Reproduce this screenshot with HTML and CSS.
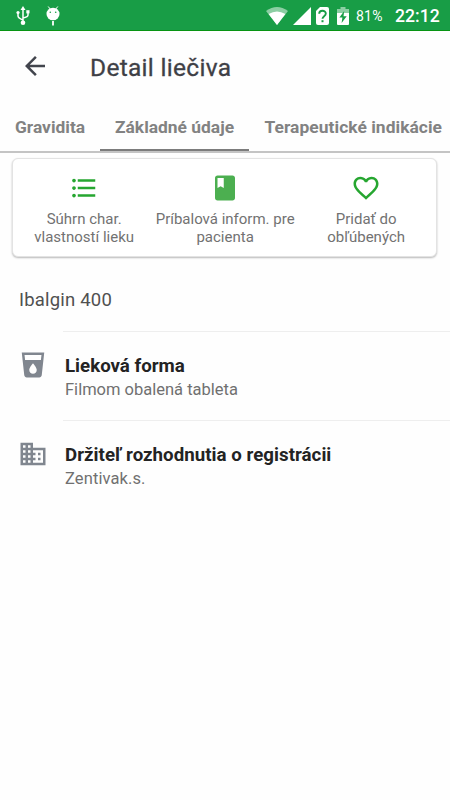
FILE: index.html
```html
<!DOCTYPE html>
<html lang="sk">
<head>
<meta charset="utf-8">
<title>Detail liečiva</title>
<link rel="stylesheet" href="styles.css">
</head>
<body>
<header class="status">
  <svg class="usb" width="14" height="20" viewBox="0 0 14 20"><path d="M7 2v14M2 7v3q0 2 5 4M12 6v3q0 2-5 3" fill="none" stroke="#fff" stroke-width="1.5"/><path d="M7 0l2.500 4h-5z"/><circle cx="2" cy="6.500" r="1.600"/><path d="M10.300 4.200h3.200v3.200h-3.200z"/><circle cx="7" cy="16.700" r="2.300"/></svg>
  <svg class="droid" width="14" height="20" viewBox="0 0 14 20"><path d="M2.200.5l2 2.500M11.800.5l-2 2.500" stroke="#fff"/><ellipse cx="7" cy="8" rx="6.500" ry="6.300"/><path d="M6.100 15h1.800v4.500H6.100z"/><circle class="hole" cx="4.300" cy="6.300" r=".8"/><circle class="hole" cx="9.700" cy="6.300" r=".8"/></svg>
  <span class="grow"></span>
  <svg class="wifi" width="22" height="18" viewBox="0 0 22 18"><path opacity=".5" d="M0 4Q11-4 22 4L11 18z"/><path d="M2.600 7Q11 2 19.400 7L11 18z"/></svg>
  <svg class="signal" width="18" height="18" viewBox="0 0 18 18"><path d="M18 0v18H0z"/></svg>
  <svg class="sim" width="13" height="18" viewBox="0 0 13 18"><path d="M4 0h7q2 0 2 2v14q0 2-2 2H2q-2 0-2-2V4z"/><path d="M3.200 6.800C3.200 2.600 9.800 2.800 9.800 6.500c0 2.700-3.300 2.700-3.300 5.300" fill="none" stroke="#189d46" stroke-width="1.900"/><path class="hole" d="M5.500 13.200h2v2h-2z"/></svg>
  <svg class="battery" width="12" height="18" viewBox="0 0 12 18"><path opacity=".5" d="M3.500 0h5v2H12v4H0V2h3.500z"/><path d="M0 6h12v11q0 1-1 1H1q-1 0-1-1z"/><path class="hole" d="M7.200 4L2.400 10.600h3L4.600 16 9.700 9.200H6.500z"/></svg>
  <span class="percent">81%</span>
  <span class="clock">22:12</span>
</header>
<div class="bar">
  <svg width="30" height="30" viewBox="0 0 24 24"><path d="M20 11H7.830l5.590-5.590L12 4l-8 8 8 8 1.410-1.410L7.830 13H20v-2z"/></svg>
  <h1>Detail liečiva</h1>
</div>
<nav class="tabs">
  <a class="tab t1">Gravidita</a>
  <a class="tab t2 active">Základné údaje</a>
  <a class="tab t3">Terapeutické indikácie</a>
</nav>
<section class="card">
  <div class="action">
    <svg width="30" height="30" viewBox="0 0 24 24"><path d="M4 10.500c-.83 0-1.500.67-1.500 1.500s.67 1.500 1.500 1.500 1.500-.67 1.500-1.500-.67-1.500-1.500-1.500zm0-6c-.83 0-1.500.67-1.500 1.500S3.170 7.500 4 7.500 5.500 6.830 5.500 6 4.830 4.500 4 4.500zm0 12c-.83 0-1.500.68-1.500 1.500s.68 1.500 1.500 1.500 1.500-.68 1.500-1.500-.67-1.500-1.500-1.500zM7 19h14v-2H7v2zm0-6h14v-2H7v2zm0-8v2h14V5H7z"/></svg>
    <p>Súhrn char.<br>vlastností lieku</p>
  </div>
  <div class="action">
    <svg width="30" height="30" viewBox="0 0 24 24"><path d="M18 2H6c-1.100 0-2 .9-2 2v16c0 1.100.9 2 2 2h12c1.100 0 2-.9 2-2V4c0-1.100-.9-2-2-2zM6 4h5v8l-2.500-1.500L6 12V4z" class="book"/></svg>
    <p>Príbalová inform. pre<br>pacienta</p>
  </div>
  <div class="action">
    <svg width="30" height="30" viewBox="0 0 24 24"><path d="M16.500 3c-1.740 0-3.410.81-4.500 2.090C10.910 3.810 9.240 3 7.500 3 4.420 3 2 5.420 2 8.500c0 3.780 3.400 6.860 8.550 11.540L12 21.350l1.450-1.320C18.600 15.360 22 12.280 22 8.500 22 5.420 19.580 3 16.500 3zm-4.400 15.550l-.1.100-.1-.1C7.140 14.240 4 11.390 4 8.500 4 6.500 5.500 5 7.500 5c1.540 0 3.040.99 3.570 2.360h1.870C13.460 5.990 14.960 5 16.500 5c2 0 3.500 1.500 3.500 3.500 0 2.890-3.140 5.740-7.900 10.050z"/></svg>
    <p>Pridať do<br>obľúbených</p>
  </div>
</section>
<h2>Ibalgin 400</h2>
<section class="row">
  <svg width="30" height="30" viewBox="0 0 24 24"><path d="M3 2l2.010 18.230C5.130 21.230 5.970 22 7 22h10c1.030 0 1.870-.77 1.990-1.770L21 2H3zm9 17c-1.660 0-3-1.340-3-3 0-2 3-5.400 3-5.400s3 3.400 3 5.400c0 1.660-1.340 3-3 3zm6.330-11H5.670l-.44-4h13.540l-.44 4z"/></svg>
  <div class="body"><h3>Lieková forma</h3><p>Filmom obalená tableta</p></div>
</section>
<section class="row">
  <svg width="30" height="30" viewBox="0 0 24 24"><path d="M12 7V3H2v18h20V7H12zM6 19H4v-2h2v2zm0-4H4v-2h2v2zm0-4H4V9h2v2zm0-4H4V5h2v2zm4 12H8v-2h2v2zm0-4H8v-2h2v2zm0-4H8V9h2v2zm0-4H8V5h2v2zm10 12h-8v-2h2v-2h-2v-2h2v-2h-2V9h8v10zm-2-8h-2v2h2v-2zm0 4h-2v2h2v-2z"/></svg>
  <div class="body"><h3 class="wide">Držiteľ rozhodnutia o registrácii</h3><p class="wide">Zentivak.s.</p></div>
</section>
</body>
</html>
```
FILE: styles.css
```css
* { box-sizing: border-box; margin: 0; padding: 0; }
body { width: 450px; height: 800px; overflow: hidden; background: #fefefe; font-family: Roboto, "Liberation Sans", sans-serif; }
svg { display: block; flex: none; }
.status { display: flex; align-items: center; height: 31px; padding: 1px 11px 0 16px; background: #189d46; border-bottom: 1px solid #079413; color: #fff; fill: #fff; }
.hole { fill: #189d46; }
.droid { margin-left: 16px; }
.grow { flex: 1; }
.signal { margin-left: 5px; }
.sim { margin-left: 5px; }
.battery { margin-left: 8px; }
.percent { width: 27px; margin-left: 7px; font-size: 14px; letter-spacing: .2px; white-space: nowrap; }
.clock { width: 44px; margin-left: 12px; font-size: 17.6px; font-weight: 500; white-space: nowrap; }
.bar { display: flex; align-items: center; height: 73px; padding-left: 20px; fill: #42454d; }
.bar svg { margin-top: -3px; }
h1 { margin-left: 40px; margin-top: -1px; font-size: 24.5px; letter-spacing: .3px; font-weight: 400; color: #3e4046; -webkit-text-stroke: .3px; white-space: nowrap; }
.tabs { display: flex; height: 49px; border-bottom: 2px solid #c4c4c4; color: #828282; font-size: 17.4px; font-weight: 700; white-space: nowrap; }
.tab { display: flex; align-items: center; padding: 0 0 1px 15px; height: 47px; }
.t1 { width: 100px; }
.t2 { width: 149px; }
.t3 { padding-left: 15.5px; letter-spacing: .05px; }
.active { border-bottom: 2px solid #7c7c7c; padding: 1px 0 0 15px; }
.card { display: grid; grid-template-columns: repeat(3, 1fr); width: 425px; height: 98.5px; margin: 5px 0 0 12.4px; padding-top: 14px; border: 1px solid #e3e3e3; border-radius: 6px; background: #fff; box-shadow: 0 1px 2px rgba(0,0,0,.28); }
.action { display: flex; flex-direction: column; align-items: center; fill: #26a630; }
.book { fill: #4caf50; }
.action p { margin: 7px 0 0 .5px; font-size: 15px; line-height: 18px; color: #727272; text-align: center; white-space: nowrap; }
h2 { height: 74.5px; padding: 31.5px 0 0 19px; font-size: 18.5px; letter-spacing: .2px; line-height: 24px; font-weight: 400; color: #505050; }
.row { display: flex; height: 89px; padding-left: 17.5px; fill: #80868f; }
.row > svg { margin-top: 18.5px; }
.body { flex: 1; margin-left: 15.5px; padding: 22px 0 0 2px; border-top: 1px solid #eee; white-space: nowrap; }
h3 { font-size: 18.7px; line-height: 24px; font-weight: 700; color: #232323; }
.body p { font-size: 16.5px; line-height: 24px; color: #707070; }
h3.wide { letter-spacing: .03px; }
p.wide { letter-spacing: .1px; }
```
